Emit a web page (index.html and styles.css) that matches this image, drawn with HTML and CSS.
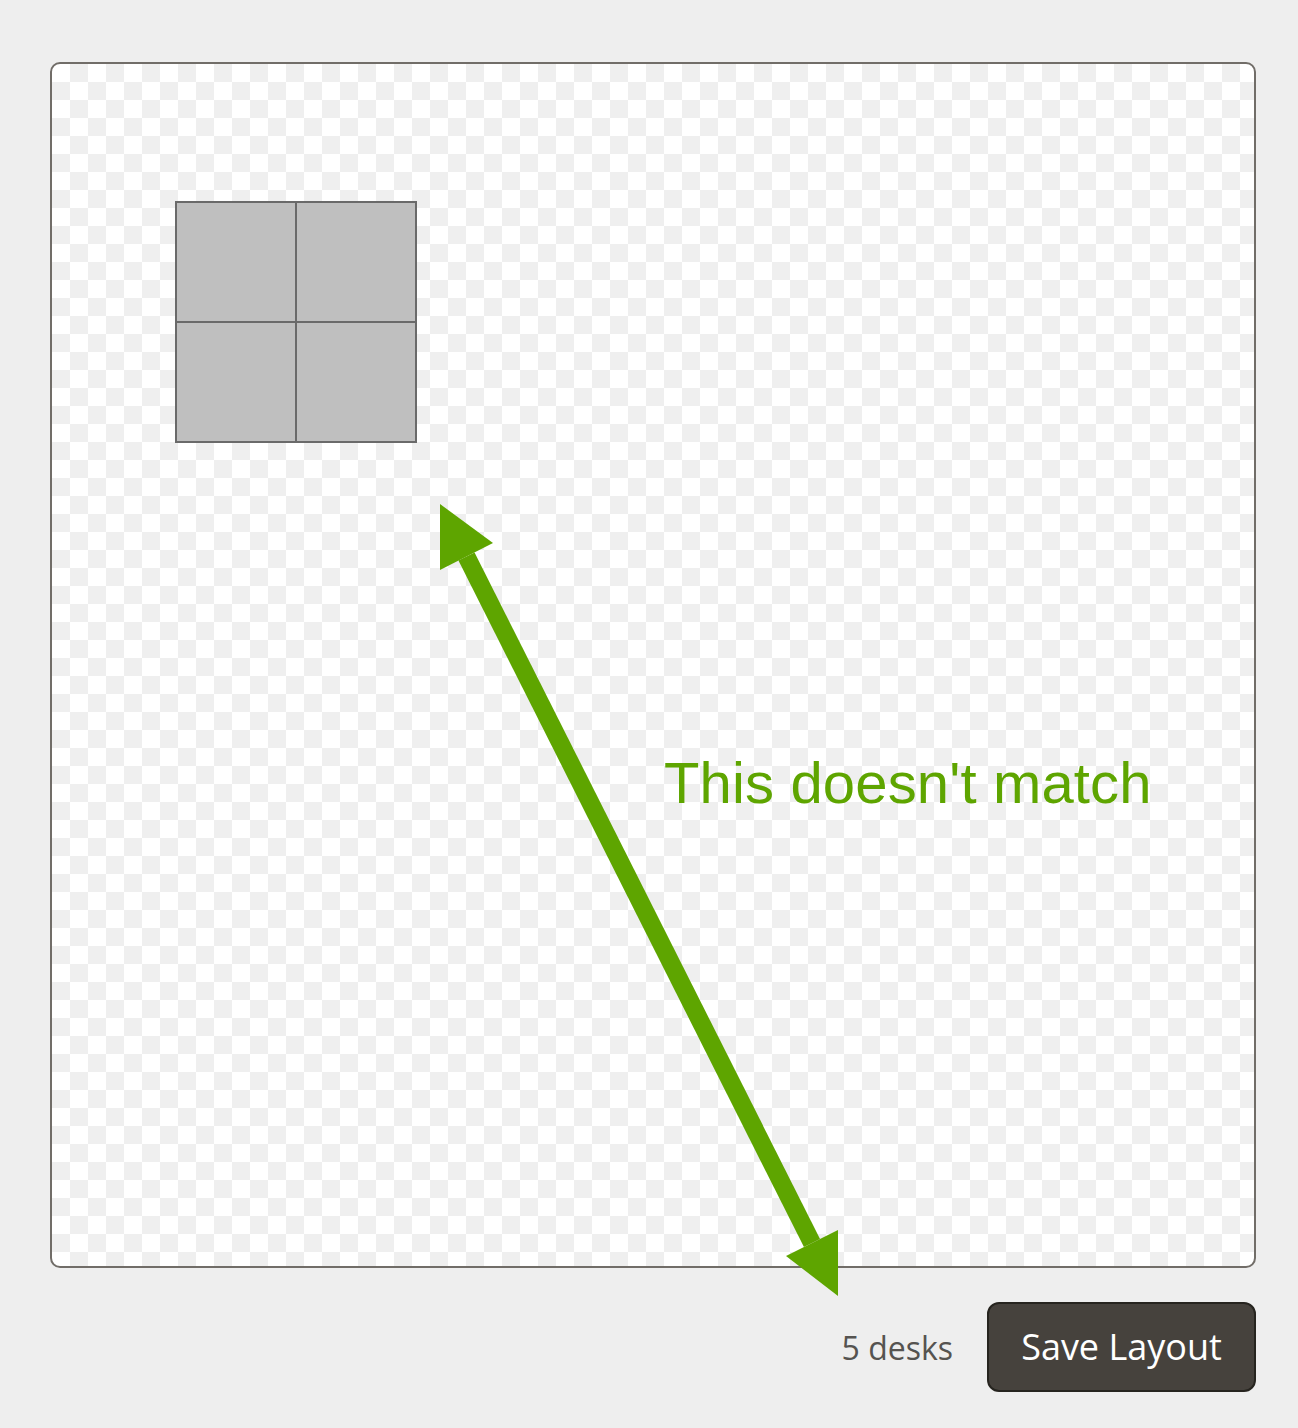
FILE: index.html
```html
<!DOCTYPE html>
<html lang="en">
<head>
<meta charset="utf-8">
<title>Desk Layout</title>
<link rel="stylesheet" href="styles.css">
</head>
<body>
<main class="page">
  <section class="canvas">
    <div class="desk-group">
      <div class="desk"></div>
      <div class="desk"></div>
      <div class="desk"></div>
      <div class="desk"></div>
    </div>
  </section>
  <footer class="footer">
    <span class="count">5 desks</span>
    <button class="save-btn" type="button">Save Layout</button>
  </footer>
</main>
<svg class="annotation" width="1298" height="1428" viewBox="0 0 1298 1428" xmlns="http://www.w3.org/2000/svg">
  <line x1="466.5" y1="556.5" x2="812" y2="1243" stroke="#5ea500" stroke-width="18"/>
  <polygon points="440,504 493,543 440,570" fill="#5ea500"/>
  <polygon points="838,1296 786,1256 838,1230" fill="#5ea500"/>
  <text x="664" y="803" class="annotation-text">This doesn't match</text>
</svg>
</body>
</html>
```

FILE: styles.css
```css
html, body {
  margin: 0;
  padding: 0;
}

body {
  background: #eeeeee;
  position: relative;
  width: 1298px;
  min-height: 1428px;
  font-family: "Open Sans", "Liberation Sans", sans-serif;
}

.page {
  padding: 62px 42px 0 50px;
  display: flex;
  flex-direction: column;
}

.canvas {
  position: relative;
  box-sizing: border-box;
  width: 1206px;
  height: 1206px;
  border: 2px solid #716d68;
  border-radius: 10px;
  background-color: #ffffff;
  background-image: conic-gradient(#efefef 25%, #ffffff 0 50%, #efefef 0 75%, #ffffff 0);
  background-size: 36px 36px;
  background-position: 0 0;
}

.desk-group {
  position: absolute;
  left: 123px;
  top: 137px;
  display: grid;
  grid-template-columns: 118px 118px;
  grid-template-rows: 118px 118px;
  gap: 2px;
  padding: 2px;
  background: #6a6a6a;
}

.desk {
  background: #bfbfbf;
}

.footer {
  margin-top: 34px;
  display: flex;
  justify-content: flex-end;
  align-items: baseline;
  gap: 34px;
}

.count {
  font-size: 32px;
  color: #555350;
}

.save-btn {
  font-family: "Open Sans", "Liberation Sans", sans-serif;
  font-size: 36px;
  line-height: 54px;
  color: #ffffff;
  background: #46423d;
  border: 2px solid #26241f;
  border-radius: 12px;
  padding: 16px 32px;
  width: 269px;
  cursor: pointer;
}

.annotation {
  position: absolute;
  left: 0;
  top: 0;
  pointer-events: none;
}

.annotation-text {
  font-family: "Liberation Sans", Arial, sans-serif;
  font-size: 58px;
  letter-spacing: 0.15px;
  fill: #5ea500;
}
```
